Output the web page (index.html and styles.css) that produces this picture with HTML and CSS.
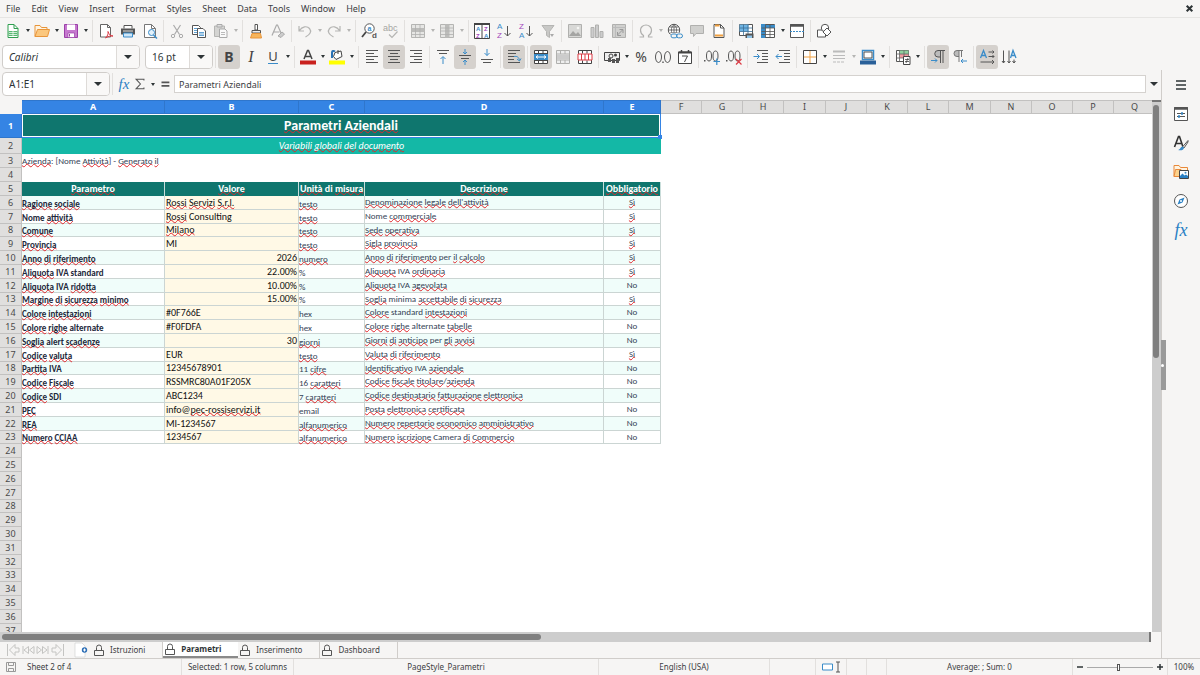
FILE: index.html
```html
<!DOCTYPE html>
<html lang="en">
<head>
<meta charset="utf-8">
<title>Parametri Aziendali</title>
<link rel="stylesheet" href="styles.css">
</head>
<body>
<nav class="menubar">
  <button>File</button><button>Edit</button><button>View</button><button>Insert</button><button>Format</button><button>Styles</button><button>Sheet</button><button>Data</button><button>Tools</button><button>Window</button><button>Help</button>
  <button class="close" aria-label="Close document"><svg viewBox="0 0 8 8"><path d="M1.500 1.500l5 5M6.500 1.500l-5 5" stroke="#2e3436" stroke-width="1.800"/></svg></button>
</nav>

<div class="toolbar">
  <button class="tb" aria-label="New"><svg viewBox="0 0 16 16"><path d="M3 1.500h6l4 4v9H3z" fill="#fff" stroke="#2f9e4f"/><path d="M9 1.500v4h4" fill="none" stroke="#2f9e4f"/><path d="M3.500 8h9v5h-9z" fill="#58b872"/><path d="M4 9.500h8M4 11.500h8M8 8v5" stroke="#fff" stroke-width=".7"/></svg></button><button class="arrow" aria-label="New options"></button>
  <button class="tb" aria-label="Open"><svg viewBox="0 0 16 16"><path d="M1 13.500V2.500h5l1.500 2H13v2" fill="#fff3e0" stroke="#e8953a"/><path d="M1 13.500l2.500-7H15.500l-2 7z" fill="#fbc77d" stroke="#e8953a"/></svg></button><button class="arrow" aria-label="Open options"></button>
  <button class="tb" aria-label="Save"><svg viewBox="0 0 16 16"><path d="M1.500 1.500h13v13h-13z" fill="#c678cf" stroke="#9b3fa8"/><path d="M4 1.500h8v5.500H4z" fill="#fff"/><path d="M5 10h6.500v4.500H5z" fill="#fff" stroke="#9b3fa8" stroke-width=".7"/><path d="M6.500 11v2.500" stroke="#9b3fa8"/></svg></button><button class="arrow" aria-label="Save options"></button>
  <i class="sep"></i>
  <button class="tb" aria-label="Export as PDF"><svg viewBox="0 0 16 16"><path d="M2.500 1.500h7l3 3v9.500h-10z" fill="#fff" stroke="#666"/><path d="M9.500 1.500v3h3" fill="none" stroke="#666"/><path d="M7.500 15c2-2 3-4 2.500-6.500 1 3 2.500 4.500 5 4.500-3-.5-5 .5-7.500 2z" fill="none" stroke="#dc3b45"/></svg></button>
  <button class="tb" aria-label="Print"><svg viewBox="0 0 16 16"><path d="M4 5.500V2.500h8v3" fill="#fff" stroke="#555"/><path d="M1 5.500h14v6H1z" fill="#555"/><path d="M3 8h10" stroke="#fff" stroke-width=".8"/><path d="M3.500 10h9v4h-9z" fill="#cfe6f7" stroke="#3a8cc9"/></svg></button>
  <button class="tb" aria-label="Print preview"><svg viewBox="0 0 16 16"><path d="M2.500 1.500h7l4 4v9h-11z" fill="#fff" stroke="#777"/><path d="M9.500 1.500v4h4" fill="none" stroke="#777"/><circle cx="9.500" cy="9.500" r="3" fill="#e4f2fb" stroke="#3a8cc9"/><path d="M11.500 12l3.500 3.500" stroke="#3a8cc9" stroke-width="1.500"/></svg></button>
  <i class="sep"></i>
  <button class="tb" disabled aria-label="Cut"><svg viewBox="0 0 16 16"><path d="M4.500 2l6 9.500M11.500 2l-6 9.500" stroke="#aaa" stroke-width="1.200"/><circle cx="4" cy="13" r="1.700" fill="none" stroke="#aaa"/><circle cx="12" cy="13" r="1.700" fill="none" stroke="#aaa"/></svg></button>
  <button class="tb" aria-label="Copy"><svg viewBox="0 0 16 16"><path d="M1.500 2.500h6l2 2v7h-8z" fill="#fff" stroke="#555"/><path d="M3 5.500h4M3 7.500h3M3 9.500h3" stroke="#3a8cc9" stroke-width=".8"/><path d="M6.500 5.500h5.500l2.500 2.500v6.500h-8z" fill="#fff" stroke="#555"/><path d="M8 9.500h5M8 11h5M8 12.500h5" stroke="#3a8cc9" stroke-width=".8"/></svg></button>
  <button class="tb" disabled aria-label="Paste"><svg viewBox="0 0 16 16"><path d="M1.500 3h10v10.500h-10z" fill="#d4d4d2" stroke="#b5b5b3"/><path d="M4 3V1.500h5V4H4z" fill="#ddd" stroke="#aaa"/><path d="M6.500 6h5.500l2 2v6.500H6.500z" fill="#fafafa" stroke="#aaa"/><path d="M8 9.500h4M8 11.500h4" stroke="#bbb"/></svg></button><button class="arrow off" disabled aria-label="Paste options"></button>
  <i class="sep"></i>
  <button class="tb" aria-label="Clone formatting"><svg viewBox="0 0 16 16"><path d="M7 1.500h2.500V7H7z" fill="#fff" stroke="#555"/><path d="M4 7.500h8.500v2.500H4z" fill="#eee" stroke="#555"/><path d="M4 10.500h8.500l1 4.500h-11z" fill="#f7b55c" stroke="#e8953a"/></svg></button>
  <button class="tb" disabled aria-label="Clear formatting"><svg viewBox="0 0 16 16"><path d="M2 12.500L6.500 2h1l4 9M3.500 9h6" fill="none" stroke="#aaa" stroke-width="1.200"/><path d="M8 13l4-4 2.500 2L11 14.500z" fill="#ccc" stroke="#aaa"/></svg></button>
  <i class="sep"></i>
  <button class="tb" disabled aria-label="Undo"><svg viewBox="0 0 16 16"><path d="M2 3v5h5M2.500 7.500C5 3.500 10 2.500 12.500 5.500s.5 6-4 8.500" fill="none" stroke="#b5b5b3" stroke-width="1.200"/></svg></button><button class="arrow off" disabled aria-label="Undo list"></button>
  <button class="tb" disabled aria-label="Redo"><svg viewBox="0 0 16 16"><path d="M14 3v5H9M13.500 7.500C11 3.500 6 2.500 3.500 5.500s-.5 6 4 8.500" fill="none" stroke="#b5b5b3" stroke-width="1.200"/></svg></button><button class="arrow off" disabled aria-label="Redo list"></button>
  <i class="sep"></i>
  <button class="tb" aria-label="Find and replace"><svg viewBox="0 0 16 16"><circle cx="8.500" cy="5.500" r="4.700" fill="#fff" stroke="#555"/><path d="M5 9L1 14" stroke="#444" stroke-width="1.800"/><text x="6.500" y="8" font-size="7" font-weight="bold" fill="#3a8cc9">a</text><text x="11" y="15" font-size="8" font-weight="bold" fill="#555">d</text></svg></button>
  <button class="tb" disabled aria-label="Spelling"><svg viewBox="0 0 16 16"><text x="0" y="8" font-size="9" fill="#a5a5a3">abc</text><path d="M6 11.500l3 3 5.500-6" fill="none" stroke="#b5b5b3" stroke-width="1.200"/></svg></button>
  <i class="sep"></i>
  <button class="tb" disabled aria-label="Row"><svg viewBox="0 0 16 16"><path d="M1.500 1.500h13v13h-13z" fill="#e6e6e4" stroke="#b5b5b3"/><path d="M1.500 5h13v4h-13z" fill="#bcbcba"/><path d="M1.500 11.500h13M5.500 1.500v13M10 1.500v13" stroke="#b0b0ae" stroke-width=".8"/></svg></button><button class="arrow off" disabled aria-label="Row options"></button>
  <button class="tb" disabled aria-label="Column"><svg viewBox="0 0 16 16"><path d="M1.500 1.500h13v13h-13z" fill="#e6e6e4" stroke="#b5b5b3"/><path d="M6 1.500h4.500v13H6z" fill="#bcbcba"/><path d="M1.500 5h13M1.500 8h13M1.500 11.500h13" stroke="#b0b0ae" stroke-width=".8"/></svg></button><button class="arrow off" disabled aria-label="Column options"></button>
  <i class="sep"></i>
  <button class="tb" aria-label="Sort"><svg viewBox="0 0 16 16"><path d="M.5 1h15v14.500H.5z" fill="#fff" stroke="#444"/><path d="M0 1h16" stroke="#444" stroke-width="2"/><path d="M8 2v13" stroke="#444"/><g font-size="6" font-weight="bold"><text x="2" y="7.500" fill="#3a8cc9">A</text><text x="2" y="14.500" fill="#a347ba">Z</text><text x="10" y="7.500" fill="#a347ba">Z</text><text x="10" y="14.500" fill="#3a8cc9">A</text></g></svg></button>
  <button class="tb" aria-label="Sort ascending"><svg viewBox="0 0 16 16"><g font-size="8"><text x="1" y="6" fill="#3a8cc9">A</text><text x="1" y="15" fill="#a347ba">Z</text></g><path d="M11.500 3v10M8.500 10l3 3 3-3" fill="none" stroke="#555"/></svg></button>
  <button class="tb" aria-label="Sort descending"><svg viewBox="0 0 16 16"><g font-size="8"><text x="1" y="6" fill="#a347ba">Z</text><text x="1" y="15" fill="#3a8cc9">A</text></g><path d="M11.500 3v10M8.500 10l3 3 3-3" fill="none" stroke="#555"/></svg></button>
  <button class="tb" disabled aria-label="AutoFilter"><svg viewBox="0 0 16 16"><path d="M2 2.500h12l-4.500 6v6l-3-2v-4z" fill="#c8c8c6" stroke="#b5b5b3"/><path d="M10 11h4l-2 3z" fill="#aaa"/></svg></button>
  <i class="sep"></i>
  <button class="tb" disabled aria-label="Insert image"><svg viewBox="0 0 16 16"><path d="M1.500 1.500h13v13h-13z" fill="#d8d8d6" stroke="#b0b0ae"/><path d="M2 13l4-5 3 3 2-2 3 4z" fill="#a5a5a3"/><circle cx="11" cy="5" r="1.300" fill="#f5f5f3"/></svg></button>
  <button class="tb" disabled aria-label="Insert chart"><svg viewBox="0 0 16 16"><path d="M2 4.500h3v10H2zM6.500 2h3v12.500h-3zM11 8.500h3v6h-3z" fill="#ccc" stroke="#b0b0ae"/></svg></button>
  <button class="tb" disabled aria-label="Pivot table"><svg viewBox="0 0 16 16"><path d="M1.500 1.500h13v13h-13z" fill="#d0d0ce" stroke="#b0b0ae"/><path d="M1.500 4.500h13M4.500 1.500v13" stroke="#bbb"/><path d="M6.500 12l5-5M8.500 6.500h3.500V10M6.500 9v3.500H10" fill="none" stroke="#999"/></svg></button>
  <i class="sep"></i>
  <button class="tb" disabled aria-label="Special character"><svg viewBox="0 0 16 16"><path d="M1.500 14h4v-1.500C3 11 2.500 9 2.500 7a5.500 5 0 0 1 11 0c0 2-.5 4-3 5.500V14h4" fill="none" stroke="#b0b0ae" stroke-width="1.200"/></svg></button><button class="arrow off" disabled aria-label="Character options"></button>
  <button class="tb" aria-label="Hyperlink"><svg viewBox="0 0 16 16"><circle cx="7" cy="7" r="5.700" fill="#fff" stroke="#555"/><path d="M7 1.500v11M1.500 7h11M2.500 4h9M3 10h8M7 1.500C3.500 4 3.500 10 7 12.500M7 1.500c3.500 2.500 3.500 8.500 0 11" fill="none" stroke="#555" stroke-width=".8"/><path d="M3.500 10h12v5.500h-12z" fill="#f5f5f3"/><rect x="4" y="11" width="6" height="3.800" rx="1.900" fill="none" stroke="#3a8cc9"/><rect x="9.500" y="11" width="6" height="3.800" rx="1.900" fill="none" stroke="#3a8cc9"/></svg></button>
  <button class="tb" aria-label="Comment"><svg viewBox="0 0 16 16"><path d="M1.500 2.500h13v8H7l-2.500 3v-3h-3z" fill="#d0d0ce" stroke="#b0b0ae"/></svg></button>
  <button class="tb" aria-label="Headers and footers"><svg viewBox="0 0 16 16"><path d="M3 1.500h6.500l3.500 3.500v9.500H3z" fill="#fff" stroke="#555"/><path d="M9.500 1.500V5H13" fill="none" stroke="#555"/><path d="M4 2.500h4.500M4 12.500h8" stroke="#f0a040" stroke-width="2"/></svg></button>
  <i class="sep"></i>
  <button class="tb" aria-label="Print area"><svg viewBox="0 0 16 16"><path d="M1.500 1.500h13v11h-13z" fill="#fff" stroke="#555"/><path d="M1.500 1.500h9v7h-9z" fill="#6db3e3"/><path d="M1.500 5h13M1.500 8.500h13M5.500 1.500v11M10 1.500v11" stroke="#3a6f97" stroke-width=".8"/><path d="M7.500 10.500h8V15h-8z" fill="#555"/><path d="M9 12.500h5V15H9z" fill="#8fc4e8"/></svg></button>
  <button class="tb" aria-label="Freeze rows and columns"><svg viewBox="0 0 16 16"><path d="M1.500 1.500h13v13h-13z" fill="#fff" stroke="#555"/><path d="M1 1h4.500v14H1zM5 2h10v3H5z" fill="#3a8cc9"/><path d="M1.500 5h13M1.500 8.500h13M1.500 11.500h13M5.500 1.500v13M10 1.500v13" stroke="#555" stroke-width=".8"/></svg></button><button class="arrow" aria-label="Freeze options"></button>
  <button class="tb" aria-label="Split window"><svg viewBox="0 0 16 16"><path d="M1.500 1.500h13v13h-13z" fill="#fff" stroke="#555"/><path d="M1 2.500h14" stroke="#555" stroke-width="2.500"/><path d="M1 8.500h14" stroke="#3a8cc9" stroke-dasharray="2 1"/></svg></button>
  <i class="sep"></i>
  <button class="tb" aria-label="Show draw functions"><svg viewBox="0 0 16 16"><path d="M1.500 7h8v7h-8z" fill="#fff" stroke="#555"/><circle cx="9" cy="5" r="3.700" fill="#fff" stroke="#555"/><path d="M11 5l4 4-4 4-4-4z" fill="#fff" stroke="#555"/></svg></button>
</div>

<div class="toolbar format">
  <label class="combo font"><select aria-label="Font name"><option>Calibri</option></select><span class="drop"></span></label>
  <label class="combo size"><select aria-label="Font size"><option>16 pt</option></select><span class="drop"></span></label>
  <i class="sep"></i>
  <button class="tb on glyph bold" aria-label="Bold">B</button>
  <button class="tb glyph italic" aria-label="Italic">I</button>
  <button class="tb glyph underline" aria-label="Underline"><span>U</span></button><button class="arrow" aria-label="Underline options"></button>
  <i class="sep"></i>
  <button class="tb" aria-label="Font color"><svg viewBox="0 0 16 16"><path d="M4 10L7.500 1.500h1L12 10M5.200 7.500h5.600" fill="none" stroke="#444" stroke-width="1.500"/><path d="M0 11.500h16v4H0z" fill="#c9211e"/></svg></button><button class="arrow" aria-label="Font color options"></button>
  <button class="tb" aria-label="Highlighting"><svg viewBox="0 0 16 16"><path d="M3 9V3.500c0-1.500 1.500-2 3-1" fill="none" stroke="#2a72b5" stroke-width="2"/><path d="M6 3.500l6-1.500 1 5.500-6 3-2.500-3z" fill="#fff" stroke="#444"/><path d="M9 1v4" stroke="#444"/><path d="M0 11.500h16v4H0z" fill="#ff0"/></svg></button><button class="arrow" aria-label="Highlighting options"></button>
  <i class="sep"></i>
  <button class="tb" aria-label="Align left"><svg viewBox="0 0 16 16"><path d="M2 1.500h12M2 4.500h8M2 7.500h12M2 10.500h8M2 13.500h12" stroke="#555"/></svg></button>
  <button class="tb on" aria-label="Center horizontally"><svg viewBox="0 0 16 16"><path d="M2 1.500h12M4 4.500h8M2 7.500h12M4 10.500h8M2 13.500h12" stroke="#555"/></svg></button>
  <button class="tb" aria-label="Align right"><svg viewBox="0 0 16 16"><path d="M2 1.500h12M6 4.500h8M2 7.500h12M6 10.500h8M2 13.500h12" stroke="#555"/></svg></button>
  <i class="sep"></i>
  <button class="tb" aria-label="Align top"><svg viewBox="0 0 16 16"><path d="M2 1.500h12M4 4.500h8" stroke="#555"/><path d="M8 15V8M5.500 10L8 7.500l2.500 2.500" fill="none" stroke="#3a8cc9"/></svg></button>
  <button class="tb on" aria-label="Center vertically"><svg viewBox="0 0 16 16"><path d="M2 6.500h12M4 9.500h8" stroke="#555"/><path d="M8 0v5M6 3l2 2 2-2M8 16v-5M6 13l2-2 2 2" fill="none" stroke="#3a8cc9"/></svg></button>
  <button class="tb" aria-label="Align bottom"><svg viewBox="0 0 16 16"><path d="M2 10.500h12M4 13.500h8" stroke="#555"/><path d="M8 0v6.500M5.500 4L8 6.500 10.500 4" fill="none" stroke="#3a8cc9"/></svg></button>
  <i class="sep"></i>
  <button class="tb on" aria-label="Wrap text"><svg viewBox="0 0 16 16"><path d="M2 1.500h12M2 4.500h8M2 7.500h6M2 10.500h6M2 13.500h12" stroke="#555"/><path d="M8 7.500c3-.5 5 .5 5.500 4M11 10l2.500 2L15 9.500" fill="none" stroke="#3a8cc9"/></svg></button>
  <i class="sep"></i>
  <button class="tb on" aria-label="Merge and center"><svg viewBox="0 0 16 16"><path d="M1.500 1.500h13v13h-13z" fill="#fff" stroke="#444"/><path d="M1.500 4.500h13M1.500 11.500h13M5.500 1.500v3M10 1.500v3M5.500 11.500v3M10 11.500v3" stroke="#444"/><path d="M1 5h14v6H1z" fill="#3a8cc9"/><path d="M3 8h10M5 6.500L3 8l2 1.500M11 6.500L13 8l-2 1.500" fill="none" stroke="#fff"/></svg></button>
  <button class="tb" disabled aria-label="Merge cells"><svg viewBox="0 0 16 16"><path d="M1.500 1.500h13v13h-13z" fill="#eee" stroke="#b0b0ae"/><path d="M1.500 5h13M1.500 11h13M5.500 1.500V5M10 1.500V5M5.500 11v3.500M10 11v3.500" stroke="#b0b0ae"/><path d="M2 6h12v4H2z" fill="#ccc"/></svg></button>
  <button class="tb" aria-label="Unmerge cells"><svg viewBox="0 0 16 16"><path d="M1.500 1.500h13v13h-13z" fill="#fff" stroke="#444"/><path d="M5.500 1.500v3M10 1.500v3M5.500 11.500v3M10 11.500v3" stroke="#444"/><path d="M1 5h14v6H1zM4.500 5v6M8 5v6M11.500 5v6" fill="#fff" stroke="#dc3b45"/></svg></button>
  <i class="sep"></i>
  <button class="tb" aria-label="Currency"><svg viewBox="0 0 16 16"><path d="M.5 3.500h15v8H.5z" fill="#eee" stroke="#444"/><circle cx="7" cy="7" r="2" fill="none" stroke="#444"/><circle cx="11.500" cy="6" r="1.500" fill="#444"/><path d="M4 9h3v4H4zM8 10h3v4H8zM12 9h3v5h-3z" fill="#555"/></svg></button><button class="arrow" aria-label="Currency options"></button>
  <button class="tb glyph num" aria-label="Percent">%</button>
  <button class="tb" aria-label="Number"><svg viewBox="0 0 16 16"><g fill="none" stroke="#555"><ellipse cx="3.500" cy="8" rx="3" ry="5.500"/><ellipse cx="12.500" cy="8" rx="3" ry="5.500"/></g><path d="M7.300 12.500h1.400v1.500H7.300z" fill="#555"/></svg></button>
  <button class="tb" aria-label="Date"><svg viewBox="0 0 16 16"><path d="M1.500 3h13v11.500h-13z" fill="#fff" stroke="#444"/><path d="M1.500 3.500h13" stroke="#444" stroke-width="2"/><path d="M4.500 1v3M11.500 1v3" stroke="#444" stroke-width="1.500"/><path d="M5 7h5.500L7.500 13" fill="none" stroke="#444"/></svg></button>
  <i class="sep"></i>
  <button class="tb" aria-label="Add decimal place"><svg viewBox="0 0 16 16"><g fill="none" stroke="#555"><ellipse cx="5" cy="7" rx="2.500" ry="5"/><ellipse cx="11.500" cy="7" rx="2.500" ry="5"/></g><path d="M0 11h1.500v1.500H0z" fill="#555"/><path d="M9.500 12.500h6.500M12.800 9.500v6.500" stroke="#3a8cc9" stroke-width="1.200"/></svg></button>
  <button class="tb" aria-label="Delete decimal place"><svg viewBox="0 0 16 16"><g fill="none" stroke="#555"><ellipse cx="5" cy="7" rx="2.500" ry="5"/><ellipse cx="11.500" cy="7" rx="2.500" ry="5"/></g><path d="M0 11h1.500v1.500H0z" fill="#555"/><path d="M10 10l5.500 5.500M15.500 10L10 15.500" stroke="#dc3b45" stroke-width="1.200"/></svg></button>
  <i class="sep"></i>
  <button class="tb" aria-label="Increase indent"><svg viewBox="0 0 16 16"><path d="M4 1.500h11M9 4.500h6M9 7.500h6M9 10.500h6M4 13.500h11" stroke="#555"/><path d="M.5 7.500H6M4 5l2.500 2.500L4 10" fill="none" stroke="#3a8cc9"/></svg></button>
  <button class="tb" aria-label="Decrease indent"><svg viewBox="0 0 16 16"><path d="M4 1.500h11M9 4.500h6M9 7.500h6M9 10.500h6M4 13.500h11" stroke="#555"/><path d="M1 7.500h6M3.500 5L1 7.500 3.500 10" fill="none" stroke="#3a8cc9"/></svg></button>
  <i class="sep"></i>
  <button class="tb" aria-label="Borders"><svg viewBox="0 0 16 16"><path d="M1.500 1.500h13v13h-13z" fill="#fff" stroke="#444"/><path d="M8 2v12M2 8h12" stroke="#f0a040"/></svg></button><button class="arrow" aria-label="Border options"></button>
  <button class="tb" disabled aria-label="Border style"><svg viewBox="0 0 16 16"><path d="M2 2.500h12" stroke="#bbb" stroke-width="2"/><path d="M2 6.500h12M2 9.500h12" stroke="#bbb"/><path d="M2 13h12" stroke="#bbb" stroke-dasharray="3 1"/></svg></button><button class="arrow off" disabled aria-label="Border style options"></button>
  <button class="tb" aria-label="Border color"><svg viewBox="0 0 16 16"><path d="M2.500 1.500h11v9h-11z" fill="#fff" stroke="#3a8cc9" stroke-width="1.500"/><path d="M4 3h8v6H4z" fill="none" stroke="#555"/><path d="M0 11.500h16v4H0z" fill="#2a6099"/></svg></button><button class="arrow" aria-label="Border color options"></button>
  <i class="sep"></i>
  <button class="tb" aria-label="Conditional formatting"><svg viewBox="0 0 16 16"><path d="M1.500 1.500h12v11h-12z" fill="#fff" stroke="#555"/><path d="M4.500 1.500h9V5h-9z" fill="#8fd19e"/><path d="M4.500 5h9v4h-9z" fill="#f19aa0"/><path d="M1.500 5h12M1.500 9h12M4.500 1.500v11M9 1.500v11" stroke="#666" stroke-width=".8"/><path d="M8.500 7.500h6.500v8H8.500z" fill="#fff" stroke="#444"/><path d="M10 10.500h4M10 12.500h4M13 9l-2 5" stroke="#444" stroke-width=".8"/></svg></button><button class="arrow" aria-label="Conditional formatting options"></button>
  <i class="sep"></i>
  <button class="tb on" aria-label="Left to right"><svg viewBox="0 0 16 16"><path d="M10 1.500H8a3 3 0 0 0 0 6.500h2z" fill="#bbb"/><path d="M15 1.500H8a3 3 0 0 0 0 6.500h2M10.500 1.500V14M13 1.500V14" fill="none" stroke="#555"/><path d="M1 11.500h6M5 9.500l2 2-2 2" fill="none" stroke="#3a8cc9"/></svg></button>
  <button class="tb" aria-label="Right to left"><svg viewBox="0 0 16 16"><path d="M7 1.500H5a3 3 0 0 0 0 6h2z" fill="#bbb"/><path d="M11 1.500H5a3 3 0 0 0 0 6h2M7 1.500V13M9.500 1.500V8" fill="none" stroke="#777"/><path d="M9 12h6M11 10l-2 2 2 2" fill="none" stroke="#3a8cc9"/></svg></button>
  <i class="sep"></i>
  <button class="tb on" aria-label="Text direction from left to right"><svg viewBox="0 0 16 16"><path d="M1.500 9L4.500 1.500 7.500 9M2.500 6.500h4" fill="none" stroke="#3a8cc9" stroke-width="1.300"/><path d="M9.500 3H15M9.500 7.500H15M1.500 13H15M13.500 1.500L15 3l-1.500 1.500M13.500 6L15 7.500 13.500 9M13 11l2 2-2 2" fill="none" stroke="#555"/></svg></button>
  <button class="tb" aria-label="Text direction from top to bottom"><svg viewBox="0 0 16 16"><path d="M9.500 9L12 1.500 15 9M10.500 6.500h3.500" fill="none" stroke="#3a8cc9" stroke-width="1.300"/><path d="M2.500 1.500V14M8 1.500V14M13 10.500V14M1 12l1.500 2L4 12M6.500 12L8 14l1.500-2M11.500 12l1.500 2 1.500-2" fill="none" stroke="#555"/></svg></button>
</div>

<div class="work">
  <main class="doc">
    <div class="formulabar">
      <div class="combo name"><input aria-label="Name box" value="A1:E1"><button class="drop" aria-label="Named ranges"></button></div>
      <i class="sep"></i>
      <button class="fx" aria-label="Function wizard">fx</button>
      <button class="fb" aria-label="Sum"><svg viewBox="0 0 16 16"><path d="M12.500 4V2.500H3.500L8.500 8l-5 5.500h9V12" fill="none" stroke="#555" stroke-width="1.200"/></svg></button><button class="arrow" aria-label="Function list"></button>
      <button class="fb" aria-label="Formula"><svg viewBox="0 0 16 16"><path d="M4 6h9M4 10h9" stroke="#555" stroke-width="2"/></svg></button>
      <input class="line" aria-label="Input line" value="Parametri Aziendali">
      <button class="expand" aria-label="Expand formula bar"></button>
    </div>

    <div class="sheetwrap">
      <div class="sheet">
        <table>
          <colgroup><col class="c-h"><col class="c-a"><col class="c-b"><col class="c-c"><col class="c-d"><col class="c-e"><col class="c-n" span="3"><col class="c-w"><col class="c-n" span="3"><col class="c-w"><col class="c-n" span="3"><col class="c-w"></colgroup>
          <thead><tr><th></th><th class="s">A</th><th class="s">B</th><th class="s">C</th><th class="s">D</th><th class="s">E</th><th>F</th><th>G</th><th>H</th><th>I</th><th>J</th><th>K</th><th>L</th><th>M</th><th>N</th><th>O</th><th>P</th><th>Q</th></tr></thead>
          <tbody>
          <tr class="title"><th class="s">1</th><td colspan="5"><u>Parametri</u> <u>Aziendali</u><span class="handle"></span></td><td colspan="12"></td></tr>
          <tr class="subtitle"><th>2</th><td colspan="5"><u>Variabili</u> <u>globali</u> <u>del</u> <u>documento</u></td><td colspan="12"></td></tr>
          <tr class="note"><th>3</th><td colspan="17"><u>Azienda</u>: [Nome <u>Attività</u>] - <u>Generato</u> <u>il</u></td></tr>
          <tr><th>4</th><td colspan="17"></td></tr>
          <tr class="heads"><th>5</th><td><u>Parametro</u></td><td><u>Valore</u></td><td><u>Unità</u> di <u>misura</u></td><td><u>Descrizione</u></td><td><u>Obbligatorio</u></td><td colspan="12"></td></tr>
          <tr class="row alt"><th>6</th><td><u>Ragione</u> <u>sociale</u></td><td><u>Rossi</u> <u>Servizi</u> <u>S.r.l.</u></td><td><u>testo</u></td><td><u>Denominazione</u> <u>legale</u> <u>dell'attività</u></td><td><u>Sì</u></td></tr>
          <tr class="row"><th>7</th><td>Nome <u>attività</u></td><td><u>Rossi</u> Consulting</td><td><u>testo</u></td><td>Nome <u>commerciale</u></td><td><u>Sì</u></td></tr>
          <tr class="row alt"><th>8</th><td><u>Comune</u></td><td><u>Milano</u></td><td><u>testo</u></td><td><u>Sede</u> <u>operativa</u></td><td><u>Sì</u></td></tr>
          <tr class="row"><th>9</th><td><u>Provincia</u></td><td>MI</td><td><u>testo</u></td><td><u>Sigla</u> <u>provincia</u></td><td><u>Sì</u></td></tr>
          <tr class="row alt"><th>10</th><td><u>Anno</u> <u>di</u> <u>riferimento</u></td><td class="n">2026</td><td><u>numero</u></td><td><u>Anno</u> <u>di</u> <u>riferimento</u> per <u>il</u> <u>calcolo</u></td><td><u>Sì</u></td></tr>
          <tr class="row"><th>11</th><td><u>Aliquota</u> IVA standard</td><td class="n">22.00%</td><td>%</td><td><u>Aliquota</u> IVA <u>ordinaria</u></td><td><u>Sì</u></td></tr>
          <tr class="row alt"><th>12</th><td><u>Aliquota</u> IVA <u>ridotta</u></td><td class="n">10.00%</td><td>%</td><td><u>Aliquota</u> IVA <u>agevolata</u></td><td>No</td></tr>
          <tr class="row"><th>13</th><td><u>Margine</u> <u>di</u> <u>sicurezza</u> <u>minimo</u></td><td class="n">15.00%</td><td>%</td><td><u>Soglia</u> minima <u>accettabile</u> <u>di</u> <u>sicurezza</u></td><td><u>Sì</u></td></tr>
          <tr class="row alt"><th>14</th><td><u>Colore</u> <u>intestazioni</u></td><td>#0F766E</td><td>hex</td><td><u>Colore</u> standard <u>intestazioni</u></td><td>No</td></tr>
          <tr class="row"><th>15</th><td><u>Colore</u> <u>righe</u> alternate</td><td>#F0FDFA</td><td>hex</td><td><u>Colore</u> <u>righe</u> alternate <u>tabelle</u></td><td>No</td></tr>
          <tr class="row alt"><th>16</th><td><u>Soglia</u> alert <u>scadenze</u></td><td class="n">30</td><td><u>giorni</u></td><td><u>Giorni</u> <u>di</u> <u>anticipo</u> per <u>gli</u> <u>avvisi</u></td><td>No</td></tr>
          <tr class="row"><th>17</th><td><u>Codice</u> <u>valuta</u></td><td>EUR</td><td><u>testo</u></td><td><u>Valuta</u> <u>di</u> <u>riferimento</u></td><td><u>Sì</u></td></tr>
          <tr class="row alt"><th>18</th><td><u>Partita</u> IVA</td><td>12345678901</td><td>11 <u>cifre</u></td><td><u>Identificativo</u> IVA <u>aziendale</u></td><td>No</td></tr>
          <tr class="row"><th>19</th><td><u>Codice</u> <u>Fiscale</u></td><td>RSSMRC80A01F205X</td><td>16 <u>caratteri</u></td><td><u>Codice</u> <u>fiscale</u> <u>titolare</u>/<u>azienda</u></td><td>No</td></tr>
          <tr class="row alt"><th>20</th><td><u>Codice</u> SDI</td><td>ABC1234</td><td>7 <u>caratteri</u></td><td><u>Codice</u> <u>destinatario</u> <u>fatturazione</u> <u>elettronica</u></td><td>No</td></tr>
          <tr class="row"><th>21</th><td><u>PEC</u></td><td>info@<u>pec-rossiservizi.it</u></td><td>email</td><td><u>Posta</u> <u>elettronica</u> <u>certificata</u></td><td>No</td></tr>
          <tr class="row alt"><th>22</th><td><u>REA</u></td><td>MI-1234567</td><td><u>alfanumerico</u></td><td><u>Numero</u> <u>repertorio</u> <u>economico</u> <u>amministrativo</u></td><td>No</td></tr>
          <tr class="row"><th>23</th><td><u>Numero</u> <u>CCIAA</u></td><td>1234567</td><td><u>alfanumerico</u></td><td><u>Numero</u> <u>iscrizione</u> Camera <u>di</u> <u>Commercio</u></td><td>No</td></tr>
          <tr><th>24</th></tr><tr><th>25</th></tr><tr><th>26</th></tr><tr><th>27</th></tr><tr><th>28</th></tr><tr><th>29</th></tr><tr><th>30</th></tr><tr><th>31</th></tr><tr><th>32</th></tr><tr><th>33</th></tr><tr><th>34</th></tr><tr><th>35</th></tr><tr><th>36</th></tr><tr><th>37</th></tr>
          </tbody>
        </table>
      </div>
      <div class="vscroll"><span class="thumb"></span></div>
    </div>
    <div class="hscroll"><span class="thumb"></span></div>

    <div class="tabs">
      <div class="tabnav">
        <button aria-label="First sheet"><svg viewBox="0 0 14 14"><path d="M1.500 1v12M9 1.500L3.500 7 9 12.500V9h4V5H9z" fill="none" stroke="#c4c4c2"/></svg></button><button aria-label="Previous sheet"><svg viewBox="0 0 14 14"><path d="M2 3v8M7.500 3.500L3 7l4.500 3.500zM13 3.500L8.500 7l4.500 3.500z" fill="none" stroke="#c4c4c2"/></svg></button><button aria-label="Next sheet"><svg viewBox="0 0 14 14"><path d="M12 3v8M1 3.500L5.500 7 1 10.500zM6.500 3.500L11 7l-4.500 3.500z" fill="none" stroke="#c4c4c2"/></svg></button><button aria-label="Last sheet"><svg viewBox="0 0 14 14"><path d="M12.500 1v12M5 1.500L10.500 7 5 12.500V9H1V5h4z" fill="none" stroke="#c4c4c2"/></svg></button>
      </div>
      <button class="addsheet" aria-label="Add sheet"><svg viewBox="0 0 14 14"><path d="M1 0h7l3 3v11H1z" fill="#fff" stroke="#ccc" stroke-width=".6"/><circle cx="10.500" cy="7" r="2.700" fill="#2a6db5"/><path d="M9 7h3M10.500 5.500v3" stroke="#fff"/></svg></button>
      <button class="tab"><svg viewBox="0 0 10 12"><path d="M.5 6.500h9v5h-9zM2.500 6.500V3.500a2.500 2.500 0 0 1 5 0v3" fill="none" stroke="#555"/></svg>Istruzioni</button>
      <button class="tab current"><svg viewBox="0 0 10 12"><path d="M.5 6.500h9v5h-9zM2.500 6.500V3.500a2.500 2.500 0 0 1 5 0v3" fill="none" stroke="#555"/></svg>Parametri</button>
      <button class="tab"><svg viewBox="0 0 10 12"><path d="M.5 6.500h9v5h-9zM2.500 6.500V3.500a2.500 2.500 0 0 1 5 0v3" fill="none" stroke="#555"/></svg>Inserimento</button>
      <button class="tab"><svg viewBox="0 0 10 12"><path d="M.5 6.500h9v5h-9zM2.500 6.500V3.500a2.500 2.500 0 0 1 5 0v3" fill="none" stroke="#555"/></svg>Dashboard</button>
    </div>
  </main>

  <aside class="sidebar">
    <button class="grip" aria-label="Hide sidebar"></button>
    <button aria-label="Sidebar settings"><svg viewBox="0 0 16 16"><path d="M3 4h10M3 8h10M3 12h10" stroke="#2e3436" stroke-width="1.500"/></svg></button>
    <button aria-label="Properties"><svg viewBox="0 0 16 16"><path d="M1.500 1.500h13v13h-13z" fill="#fff" stroke="#555"/><path d="M1 2.500h14" stroke="#555" stroke-width="2.500"/><path d="M4 7.500h8M4 10.500h8" stroke="#555"/><path d="M9 6v3M6 9v3" stroke="#3a8cc9" stroke-width="1.500"/></svg></button>
    <button aria-label="Styles"><svg viewBox="0 0 16 16"><path d="M1.500 12L5.500 1.500h1L10 12M3 8.500h6" fill="none" stroke="#333" stroke-width="1.600"/><path d="M15 5.500L9.500 12l1.500 1 4-6z" fill="#fff" stroke="#555"/><path d="M9.500 11.500c-2 0-2 3-4.500 3.500 2.500.8 6 .3 6-2.500z" fill="#3a8cc9"/></svg></button>
    <button aria-label="Gallery"><svg viewBox="0 0 16 16"><path d="M1 12.500V1.500h5l1.500 2H14.500v3" fill="#fff3e0" stroke="#e8893a"/><path d="M1 12.500l1.500-7H8v7z" fill="#fbd28d" stroke="#e8893a"/><path d="M6.500 6.500h9v8h-9z" fill="#fff" stroke="#444"/><path d="M7 14v-2l2.500-2.500 2 2 1.500-1 2 1.500v2z" fill="#2a80c4"/><circle cx="12.500" cy="8.700" r="1" fill="#3a8cc9"/></svg></button>
    <button aria-label="Navigator"><svg viewBox="0 0 16 16"><circle cx="8" cy="8" r="6.500" fill="#fff" stroke="#555"/><path d="M11.500 4.500L9.500 9.500 4.500 11.500 6.500 6.500z" fill="#2a80c4"/><circle cx="8" cy="8" r="1" fill="#fff"/></svg></button>
    <button class="fx" aria-label="Functions">fx</button>
  </aside>
</div>

<footer class="status">
  <span><svg viewBox="0 0 12 12"><path d="M1.500 1.500h9v9h-9zM3.500 1.500v3h5v-3M3.500 10.500v-3h5v3" fill="none" stroke="#999"/></svg></span>
  <span class="left">Sheet 2 of 4</span>
  <span class="b">Selected: 1 row, 5 columns</span>
  <span class="b">PageStyle_Parametri</span>
  <span class="b">English (USA)</span>
  <span class="b"></span>
  <span class="b"><svg class="mode" viewBox="0 0 20 12"><path d="M1.500 3h10v6h-10z" fill="#fff" stroke="#3a8cc9"/><path d="M17 1v10M15 1h4M15 11h4" stroke="#555" fill="none"/></svg></span>
  <span class="b"></span>
  <span class="b"></span>
  <span class="b">Average: ; Sum: 0</span>
  <span class="b zoom"><button aria-label="Zoom out"><svg viewBox="0 0 8 8"><path d="M1 4h6" stroke="#2e3436" stroke-width="1.500"/></svg></button><input type="range" aria-label="Zoom" min="0" max="100" value="48"><button aria-label="Zoom in"><svg viewBox="0 0 8 8"><path d="M1 4h6M4 1v6" stroke="#2e3436" stroke-width="1.500"/></svg></button></span>
  <span class="b">100%</span>
</footer>
</body>
</html>
```
FILE: styles.css
```css
* { box-sizing: border-box; }

body {
  margin: 0;
  height: 100vh;
  display: flex;
  flex-direction: column;
  overflow: hidden;
  background: #f6f5f4;
  color: #3c4043;
  font: 9px/12px "Noto Sans", sans-serif;
}

button, input, select {
  font: inherit;
  color: inherit;
  margin: 0;
  padding: 0;
  border: 0;
  background: none;
  border-radius: 0;
}
svg { display: block; flex: none; overflow: visible; }
svg text { font-family: "Liberation Sans", sans-serif; }

/* Menu */
.menubar {
  display: flex;
  align-items: center;
  gap: 11px;
  height: 17px;
  flex: none;
  padding: 0 6px;
}
.menubar .close { margin-left: auto; }
.close svg { width: 9px; height: 9px; }

/* Toolbars */
.toolbar {
  display: flex;
  align-items: center;
  height: 27px;
  flex: none;
  padding-left: 2px;
}
.menubar + .toolbar { border-top: 1px solid #e6e5e3; height: 26px; }
.tb {
  width: 22px;
  height: 24px;
  flex: none;
  display: flex;
  align-items: center;
  justify-content: center;
  border-radius: 3px;
}
.tb svg { width: 16px; height: 16px; }
.tb.on { background: #d5d1cd; }
.arrow {
  width: 7px;
  height: 24px;
  flex: none;
  display: flex;
  align-items: center;
  justify-content: center;
}
.arrow::before, .drop::before, .expand::before {
  content: "";
  border: solid transparent;
  border-width: 3px 2px 0;
  border-top-color: #2e3436;
}
.arrow.off::before { border-top-color: #b5b5b3; }
.sep { width: 5px; height: 22px; flex: none; display: flex; justify-content: center; }
.sep::before { content: ""; width: 1px; background: #e2e0de; }
.arrow + .sep { width: 6px; }

.glyph { font: 16px/20px "Noto Sans", sans-serif; color: #444; }
.glyph.bold { font-weight: 700; font-size: 14px; }
.glyph.italic { font-family: "Liberation Serif", serif; font-style: italic; }
.glyph.underline { font-size: 13px; }
.glyph.underline span { line-height: 14px; border-bottom: 1px solid #3a8cc9; }
.glyph.num { font-size: 14px; }

.combo {
  display: flex;
  height: 24px;
  flex: none;
  background: #fff;
  border: 1px solid #d0cdca;
  border-radius: 4px;
  overflow: hidden;
}
.combo select, .combo input {
  flex: 1;
  min-width: 0;
  padding-left: 6px;
  appearance: none;
  font-size: 10px;
  color: #2e3436;
  outline: 0;
}
.combo .drop {
  width: 23px;
  display: flex;
  align-items: center;
  justify-content: center;
  background: #f9f8f7;
  border-left: 1px solid #dedbd8;
}
.drop::before, .expand::before { border-width: 4px 4px 0; }
.combo.font { width: 138px; margin-right: 5px; }
.combo.font select { font-style: italic; }
.combo.size { width: 68px; }
.combo.name { width: 108px; }

/* Working area */
.work { flex: 1; min-height: 0; display: flex; }
.doc { flex: 1; min-width: 0; display: flex; flex-direction: column; }
.formulabar {
  display: flex;
  align-items: center;
  height: 30px;
  flex: none;
  padding-left: 2px;
  padding-bottom: 2px;
}
.formulabar .sep { margin-right: 2px; }
.fx { width: 14px; font: italic 15px/16px "Liberation Serif", serif; color: #2a80c4; text-align: center; }
.fb { width: 18px; flex: none; display: flex; justify-content: center; }
.fb svg { width: 14px; height: 14px; }
.formulabar .line {
  flex: 1;
  min-width: 0;
  height: 18px;
  padding-left: 4px;
  background: #fff;
  border: 1px solid #d5d2cf;
  outline: 0;
}
.formulabar .expand { width: 15px; display: flex; justify-content: center; }

.sheetwrap { flex: 1; min-height: 0; display: flex; }
.sheet { flex: 1; min-width: 0; overflow: hidden; background: #fff; }

table { table-layout: fixed; width: 1px; border-collapse: separate; border-spacing: 0; }
.c-h { width: 22px; }
.c-a { width: 143px; }
.c-b { width: 134px; }
.c-c { width: 66px; }
.c-d { width: 239px; }
.c-e { width: 57px; }
.c-n { width: 41px; }
.c-w { width: 42px; }
tr { height: 14px; }
tbody tr:nth-child(5n+8) { height: 13px; }
th, td { padding: 0; line-height: 12px; white-space: nowrap; }
th {
  background: #e0dfde;
  color: #4a4a4a;
  font-weight: 400;
  border-right: 1px solid #c2c1c0;
  border-bottom: 1px solid #c2c1c0;
}
thead th { border-top: 1px solid #c2c1c0; }
thead th:first-child { background: #f6f5f4; border-color: #f6f5f4; }
th.s { background: #3584e4; color: #fff; font-weight: 700; border-color: #2f76cc; }

td { font-family: Carlito, Lato, sans-serif; color: #334155; }
td u {
  text-decoration: underline wavy #e0262b 1px;
  text-decoration-skip-ink: none;
  text-underline-offset: -1px;
}

.title { height: 24px; }
.title td:nth-child(2) {
  position: relative;
  background: #0f766e;
  color: #fff;
  font-size: 14px;
  line-height: 18px;
  font-weight: 700;
  text-align: center;
  border: solid #3584e4;
  border-width: 0 1px 1px 0;
  box-shadow: inset 0 0 0 1px #fff;
}
.handle {
  position: absolute;
  right: -2px;
  bottom: -2px;
  width: 4px;
  height: 4px;
  background: #3584e4;
}
.subtitle { height: 16px; }
.subtitle td:nth-child(2) {
  background: #14b8a6;
  color: #fff;
  font-style: italic;
  font-size: 10px;
  text-align: center;
}
.heads td { font-size: 10px; font-weight: 700; text-align: center; }
.heads td:nth-child(-n+6) {
  background: #0f766e;
  color: #fff;
  border-right: 1px solid #c9dedb;
}
.row td {
  border-right: 1px solid #cbd5d3;
  border-bottom: 1px solid #cbd5d3;
  vertical-align: top;
}
.row.alt td { background: #f0fdfa; }
.row td:nth-child(2), .row td:nth-child(4) { vertical-align: bottom; line-height: 10px; }
.row td:nth-child(2) { font-weight: 700; color: #1e293b; }
.row td:nth-child(3) { padding: 0 1px; background: #fff9e6; color: #111; font-size: 10px; vertical-align: middle; }
.row.alt td:nth-child(3) { background: #fff9e6; }
.row td:nth-child(6) { text-align: center; }
.row .n { text-align: right; }

.vscroll {
  width: 9px;
  background: #cdcdcd;
  border-top: 2px solid #777;
  padding: 3px 2px 0 1px;
}
.vscroll .thumb { display: block; height: 48%; background: #7f7f7f; border-radius: 3px; }
.hscroll {
  height: 10px;
  flex: none;
  margin-right: 10px;
  padding: 2px 0 2px 2px;
  background: #cdcdcd;
  border-right: 2px solid #777;
}
.hscroll .thumb { display: block; width: 47%; height: 6px; background: #7f7f7f; border-radius: 3px; }

/* Sheet tabs */
.tabs { display: flex; height: 16px; flex: none; font-size: 8px; }
.tabnav { display: flex; align-items: center; gap: 1px; margin: 0 9px 0 6px; }
.tabnav svg, .addsheet svg { width: 14px; height: 14px; }
.addsheet { width: 18px; }
.tab {
  display: flex;
  align-items: center;
  gap: 6px;
  padding: 0 17px 0 2px;
  border-right: 1px solid #d0cdca;
}
.tab svg { width: 10px; height: 12px; }
.tab.current {
  background: #fff;
  font-weight: 700;
  color: #2e3436;
  border-right: 0;
  border-bottom: 2px solid #8a8a8a;
}

/* Sidebar */
.sidebar {
  position: relative;
  width: 39px;
  flex: none;
  border-left: 1px solid #d0cdca;
  display: flex;
  flex-direction: column;
  align-items: center;
  gap: 13px;
  padding-top: 7px;
}
.sidebar button { width: 16px; height: 16px; }
.sidebar svg { width: 16px; height: 16px; }
.sidebar .fx { font-size: 18px; }
.sidebar .grip {
  position: absolute;
  left: -1px;
  top: 46%;
  width: 5px;
  height: 50px;
  background: #9a9a9a;
  display: flex;
  align-items: center;
}
.grip::before { content: ""; width: 3px; height: 3px; border-radius: 50%; background: #fff; }

/* Status bar */
.status {
  display: grid;
  grid-template-columns: 22px 159px 112px 305fr 171fr 46px 31px 20px 20px 186fr 95px 33px;
  height: 17px;
  flex: none;
  border-top: 1px solid #d0cdca;
  font-size: 8px;
}
.status span { display: flex; align-items: center; justify-content: center; white-space: nowrap; }
.status .left { justify-content: flex-start; padding-left: 5px; }
.status .b { border-left: 1px solid #e2e0de; }
.status svg { width: 12px; height: 12px; }
.status .mode { width: 20px; }
.zoom svg { width: 8px; height: 8px; }
.zoom input {
  appearance: none;
  width: 66px;
  height: 10px;
  margin: 0 3px;
  background: linear-gradient(#aaa, #aaa) center / 100% 1px no-repeat;
}
.zoom input::-webkit-slider-thumb {
  appearance: none;
  width: 3px;
  height: 7px;
  background: #fff;
  border: 1px solid #555;
}
```
